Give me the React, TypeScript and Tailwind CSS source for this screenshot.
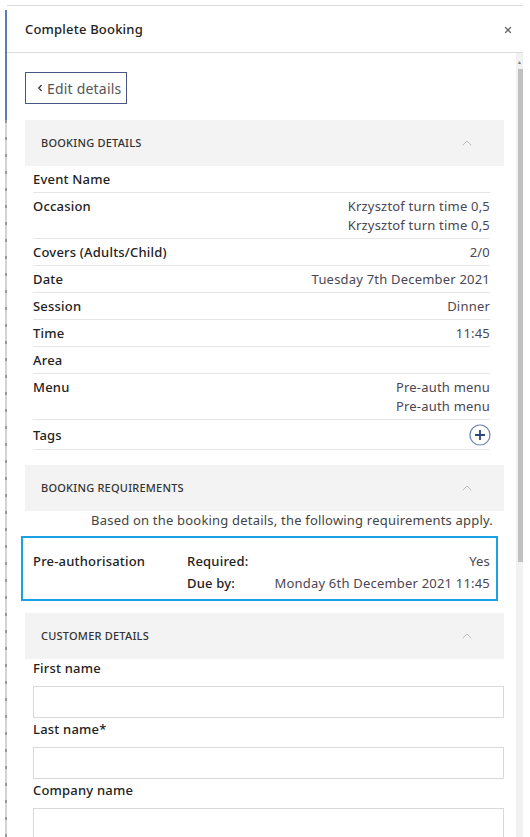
import { ChevronUp, ChevronLeft, X } from 'lucide-react';

const font = { fontFamily: '"Noto Sans", "Liberation Sans", sans-serif' };

interface Row {
    label: string;
    values?: string[];
}

const bookingRows: Row[] = [
    { label: 'Event Name' },
    { label: 'Occasion', values: ['Krzysztof turn time 0,5', 'Krzysztof turn time 0,5'] },
    { label: 'Covers (Adults/Child)', values: ['2/0'] },
    { label: 'Date', values: ['Tuesday 7th December 2021'] },
    { label: 'Session', values: ['Dinner'] },
    { label: 'Time', values: ['11:45'] },
    { label: 'Area' },
    { label: 'Menu', values: ['Pre-auth menu', 'Pre-auth menu'] },
];

function SectionHeader({ title }: { title: string }) {
    return (
        <div className="flex h-[46px] items-center justify-between bg-[#f3f3f3] pl-4 pr-[29px]">
            <span className="text-[11px] font-medium uppercase tracking-[0.02em] text-[#333]">{title}</span>
            <ChevronUp className="h-4 w-4 text-[#bdbdbd]" strokeWidth={1.5} />
        </div>
    );
}

function Field({ label, first }: { label: string; first?: boolean }) {
    return (
        <div className={first ? '' : 'mt-[2px]'}>
            <div className="pl-2 text-[13px] font-medium leading-[19px] text-[#222]">{label}</div>
            <div className="ml-2 mt-2 h-[32px] border border-[#d9d9d9] bg-white" />
        </div>
    );
}

export default function App() {
    return (
        <div className="relative flex h-[837px] w-[530px] overflow-hidden bg-white tracking-[0.2px]" style={font}>
            {/* left gutter line */}
            <div className="w-[5px] shrink-0" />
            <div className="flex w-[2px] shrink-0 flex-col pt-[10px]">
                <div className="h-[110px] bg-[#5b7db3]" />
                <div className="flex-1 bg-[repeating-linear-gradient(to_bottom,#9a9a9a_0px,#9a9a9a_3px,#d4d4d4_3px,#d4d4d4_17px)]" />
            </div>

            <div className="mt-[5px] flex w-[516px] shrink-0 flex-col border-t border-[#dedede]">
                {/* header */}
                <div className="flex h-[47px] shrink-0 items-center justify-between border-b border-[#dcdcdc] pl-[18px] pr-[10px] pt-[2px]">
                    <span className="text-[13px] font-medium text-[#222]">Complete Booking</span>
                    <X className="h-[10px] w-[10px] text-[#666]" strokeWidth={3} />
                </div>

                <div className="flex min-h-0 flex-1">
                    {/* scrolling body */}
                    <div className="w-[509px] shrink-0 pl-[18px] pr-[12px] pt-[19px]">
                        <button className="flex h-[32px] w-[102px] items-center gap-[2px] border border-[#4a5683] pl-[9px] text-[14px] text-[#555]">
                            <ChevronLeft className="h-[10px] w-[10px] text-[#333]" strokeWidth={3} />
                            Edit details
                        </button>

                        <div className="mt-4">
                            <SectionHeader title="Booking Details" />
                            <div className="pl-2 pr-[14px]">
                                {bookingRows.map((row) => (
                                    <div key={row.label} className="flex justify-between border-b border-[#e6e6e6] pb-[3px] pt-[4px] text-[13px] leading-[19px]">
                                        <span className="font-medium text-[#222]">{row.label}</span>
                                        {row.values && (
                                            <div className="flex flex-col items-end text-[#4b4654]">
                                                {row.values.map((v, i) => (
                                                    <span key={i}>{v}</span>
                                                ))}
                                            </div>
                                        )}
                                    </div>
                                ))}
                                <div className="flex items-center justify-between border-b border-[#e6e6e6] pb-[3px] pt-[4px] text-[13px] leading-[19px]">
                                    <span className="font-medium text-[#222]">Tags</span>
                                    <svg width="22" height="22" viewBox="0 0 22 22" className="mr-[-1px]">
                                        <circle cx="11" cy="11" r="10" fill="none" stroke="#6d83b8" strokeWidth="1.2" />
                                        <path d="M11 6v10M6 11h10" stroke="#2d4583" strokeWidth="1.8" />
                                    </svg>
                                </div>
                            </div>
                        </div>

                        <div className="mt-[15px]">
                            <SectionHeader title="Booking Requirements" />
                            <div className="pr-[11px] text-right text-[13px] leading-[19px] text-[#444]">
                                Based on the booking details, the following requirements apply.
                            </div>
                            <div className="ml-[-4px] mr-[6px] mt-[6px] flex border-2 border-[#1ba1e2] pb-[5px] pl-[10px] pr-[6px] pt-[12px] text-[13px] leading-[22px]">
                                <span className="w-[154px] shrink-0 font-medium text-[#222]">Pre-authorisation</span>
                                <div className="flex flex-1 flex-col">
                                    <div className="flex justify-between">
                                        <span className="font-medium text-[#222]">Required:</span>
                                        <span className="text-[#4b4654]">Yes</span>
                                    </div>
                                    <div className="flex justify-between">
                                        <span className="font-medium text-[#222]">Due by:</span>
                                        <span className="text-[#4b4654]">Monday 6th December 2021 11:45</span>
                                    </div>
                                </div>
                            </div>
                        </div>

                        <div className="mt-[12px]">
                            <SectionHeader title="Customer Details" />
                            <Field label="First name" first />
                            <Field label="Last name*" />
                            <Field label="Company name" />
                        </div>
                    </div>

                    {/* scrollbar */}
                    <div className="flex w-[7px] shrink-0 flex-col items-center bg-[#f1f1f1]">
                        <span className="mt-[6px] text-[5px] leading-[6px] text-[#777]">▲</span>
                        <div className="ml-[2px] mt-[4px] h-[493px] w-[5px] bg-[#c1c1c1]" />
                    </div>
                </div>
            </div>
        </div>
    );
}
